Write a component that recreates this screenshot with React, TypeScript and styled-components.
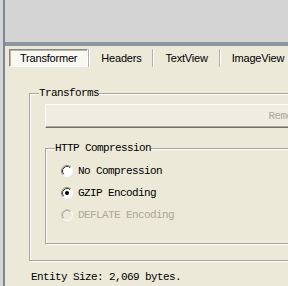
import React from "react";
import styled, { createGlobalStyle } from "styled-components";

const GlobalStyle = createGlobalStyle`
  html, body {
    margin: 0;
    padding: 0;
    background: #d4d4d4;
  }
`;

const Frame = styled.div`
  display: flex;
  width: 288px;
  height: 286px;
  overflow: hidden;
  background: #d4d4d4;
`;

const EdgeBar = styled.div`
  flex-shrink: 0;
  width: 2px;
  margin-left: 3px;
  background: #7d8894;
`;

const Main = styled.div`
  flex: 1;
  min-width: 0;
  display: flex;
  flex-direction: column;
  overflow: hidden;
`;

const TopPane = styled.div`
  flex-shrink: 0;
  height: 42px;
  background: #d4d4d4;
`;

const Splitter = styled.div`
  flex-shrink: 0;
  height: 4px;
  background: #8d97a3;
`;

const TabPage = styled.div`
  flex: 1;
  display: flex;
  flex-direction: column;
  background: #ece9d8;
`;

const TabStrip = styled.div`
  display: flex;
  align-items: center;
  padding: 3px 0 0 4px;
  white-space: nowrap;
`;

const Tab = styled.div<{ $active?: boolean }>`
  flex-shrink: 0;
  display: flex;
  align-items: center;
  box-sizing: border-box;
  height: 18px;
  padding: 0 ${(p) => (p.$active ? "10px" : "11px")};
  font: 11px "Liberation Sans", Arial, sans-serif;
  letter-spacing: -0.2px;
  color: #000;
  ${(p) =>
    p.$active &&
    `
    border: 1px solid;
    border-color: #8a8880 #ffffff #ffffff #8a8880;
    box-shadow: inset 1px 1px 0 #b9b7ad;
    background: #f8f7f2;
  `}
`;

const TabSep = styled.div`
  flex-shrink: 0;
  width: 1px;
  height: 18px;
  border-left: 1px solid #b4b2a6;
  background: #ffffff;
`;

const Content = styled.div`
  display: flex;
  flex-direction: column;
  align-items: flex-start;
  padding: 20px 0 0 24px;
`;

const GroupBox = styled.fieldset<{ $width?: string }>`
  margin: 0;
  min-width: 0;
  width: ${(p) => p.$width || "auto"};
  box-sizing: border-box;
  padding: 5px 15px 16px;
  border: 1px solid #a7a69a;
  box-shadow: inset 1px 1px 0 #ffffff, 1px 1px 0 #ffffff;
  display: flex;
  flex-direction: column;
  align-items: stretch;
`;

const Caption = styled.legend`
  margin-left: -6px;
  padding: 0;
  background: #ece9d8;
  font: 11px/12px "Liberation Mono", "Courier New", monospace;
  letter-spacing: -0.6px;
  color: #000;
`;

const Button = styled.div`
  box-sizing: border-box;
  height: 24px;
  display: flex;
  align-items: center;
  justify-content: center;
  background: #efede2;
  border-top: 1px solid #ffffff;
  border-left: 1px solid #ffffff;
  border-bottom: 1px solid #716f64;
  box-shadow: inset 0 -1px 0 #aca899;
  font: 11px "Liberation Mono", "Courier New", monospace;
  letter-spacing: -0.6px;
  color: #aca899;
  white-space: nowrap;
`;

const InnerGroup = styled(GroupBox)`
  margin-top: 14px;
  padding: 6px 15px 17px;
`;

const RadioRow = styled.label<{ $disabled?: boolean }>`
  display: flex;
  align-items: center;
  height: 22px;
  gap: 5px;
  font: 11px "Liberation Mono", "Courier New", monospace;
  letter-spacing: -0.6px;
  color: ${(p) => (p.$disabled ? "#aca899" : "#000")};
`;

const Status = styled.div`
  margin: 10px 0 0 2px;
  font: 11px/12px "Liberation Mono", "Courier New", monospace;
  letter-spacing: -0.6px;
  color: #000;
  white-space: nowrap;
`;

function Radio({ checked, disabled }: { checked?: boolean; disabled?: boolean }) {
  return (
    <svg width="12" height="12" viewBox="0 0 12 12">
      <circle cx="6" cy="6" r="5" fill={disabled ? "#ece9d8" : "#ffffff"} />
      <path d="M2.11 9.89 A5.5 5.5 0 0 1 9.89 2.11" fill="none" stroke={disabled ? "#c8c6ba" : "#808080"} strokeWidth="1" />
      <path d="M2.82 9.18 A4.5 4.5 0 0 1 9.18 2.82" fill="none" stroke={disabled ? "#aca899" : "#404040"} strokeWidth="1" />
      <path d="M9.89 2.11 A5.5 5.5 0 0 1 2.11 9.89" fill="none" stroke="#ffffff" strokeWidth="1" />
      {checked && <circle cx="6" cy="6" r="2" fill="#000" />}
    </svg>
  );
}

const tabs = ["Transformer", "Headers", "TextView", "ImageView"];

export default function App() {
  return (
    <>
      <GlobalStyle />
      <Frame>
        <EdgeBar />
        <Main>
          <TopPane />
          <Splitter />
          <TabPage>
            <TabStrip>
              {tabs.map((t, i) => (
                <React.Fragment key={t}>
                  <Tab $active={i === 0}>{t}</Tab>
                  <TabSep />
                </React.Fragment>
              ))}
            </TabStrip>
            <Content>
              <GroupBox $width="538px">
                <Caption>Transforms</Caption>
                <Button>Remove All</Button>
                <InnerGroup>
                  <Caption>HTTP Compression</Caption>
                  <RadioRow>
                    <Radio />
                    No Compression
                  </RadioRow>
                  <RadioRow>
                    <Radio checked />
                    GZIP Encoding
                  </RadioRow>
                  <RadioRow $disabled>
                    <Radio disabled />
                    DEFLATE Encoding
                  </RadioRow>
                </InnerGroup>
              </GroupBox>
              <Status>Entity Size: 2,069 bytes.</Status>
            </Content>
          </TabPage>
        </Main>
      </Frame>
    </>
  );
}
